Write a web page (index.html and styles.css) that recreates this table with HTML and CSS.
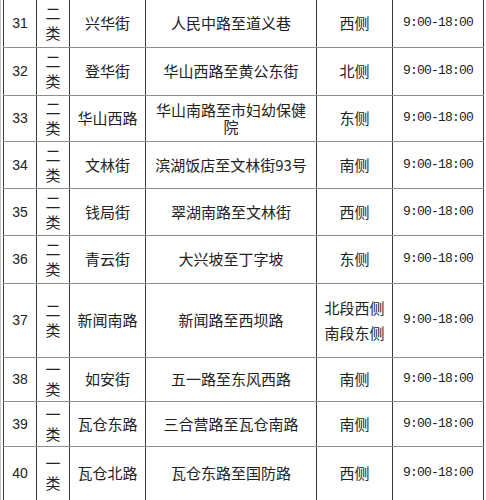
FILE: index.html
```html
<!DOCTYPE html>
<html lang="zh-CN">
<head>
<meta charset="utf-8">
<link rel="stylesheet" href="styles.css">
</head>
<body>
<div class="wrap">
<table class="grid">
  <colgroup>
    <col class="c-no"><col class="c-type"><col class="c-name"><col class="c-range"><col class="c-side"><col class="c-time">
  </colgroup>
  <tbody>
    <tr class="r47"><td class="no">31</td><td class="type">二类</td><td>兴华街</td><td>人民中路至道义巷</td><td>西侧</td><td class="time">9:00-18:00</td></tr>
    <tr class="r48"><td class="no">32</td><td class="type">二类</td><td>登华街</td><td>华山西路至黄公东街</td><td>北侧</td><td class="time">9:00-18:00</td></tr>
    <tr class="r46"><td class="no">33</td><td class="type">二类</td><td>华山西路</td><td class="tight">华山南路至市妇幼保健院</td><td>东侧</td><td class="time">9:00-18:00</td></tr>
    <tr class="r47"><td class="no">34</td><td class="type">二类</td><td>文林街</td><td>滨湖饭店至文林街93号</td><td>南侧</td><td class="time">9:00-18:00</td></tr>
    <tr class="r47"><td class="no">35</td><td class="type">二类</td><td>钱局街</td><td>翠湖南路至文林街</td><td>西侧</td><td class="time">9:00-18:00</td></tr>
    <tr class="r48"><td class="no">36</td><td class="type">二类</td><td>青云街</td><td>大兴坡至丁字坡</td><td>东侧</td><td class="time">9:00-18:00</td></tr>
    <tr class="r74"><td class="no">37</td><td class="type">二类</td><td>新闻南路</td><td>新闻路至西坝路</td><td class="loose">北段西侧<br>南段东侧</td><td class="time">9:00-18:00</td></tr>
    <tr class="r44"><td class="no">38</td><td class="type">一类</td><td>如安街</td><td>五一路至东风西路</td><td>南侧</td><td class="time">9:00-18:00</td></tr>
    <tr class="r45"><td class="no">39</td><td class="type">一类</td><td>瓦仓东路</td><td>三合营路至瓦仓南路</td><td>南侧</td><td class="time">9:00-18:00</td></tr>
    <tr class="r54"><td class="no">40</td><td class="type">一类</td><td>瓦仓北路</td><td>瓦仓东路至国防路</td><td>西侧</td><td class="time">9:00-18:00</td></tr>
  </tbody>
</table>
</div>
</body>
</html>
```
FILE: styles.css
```css
html, body {
  margin: 0;
  padding: 0;
  background: #fff;
}
.wrap {
  border-left: 1px solid #c4c4c4;
  padding-left: 2px;
  height: 500px;
  overflow: hidden;
}
.grid {
  border-collapse: collapse;
  table-layout: fixed;
  width: 480px;
  border-top: hidden;
  font-family: "Noto Sans CJK SC", "Liberation Sans", sans-serif;
  font-size: 15px;
  color: #222;
}
.c-no { width: 33px; }
.c-type { width: 33px; }
.c-name { width: 76px; }
.c-range { width: 171px; }
.c-side { width: 76px; }
.c-time { width: 91px; }
.grid td {
  border-left: 1px solid #3c3c3c;
  border-right: 1px solid #3c3c3c;
  border-top: 1px solid #8e8e8e;
  border-bottom: 1px solid #8e8e8e;
  text-align: center;
  vertical-align: middle;
  padding: 0 5px;
  line-height: 20px;
  font-weight: 400;
}
.grid td.no {
  font-family: "Liberation Sans", Arial, sans-serif;
  font-size: 14px;
  padding: 0;
}
.grid td.type {
  padding: 0 7px;
  line-height: 20px;
}
.grid td.time {
  font-family: "Liberation Mono", monospace;
  font-size: 13px;
  letter-spacing: -0.8px;
  padding: 0;
}
.grid td.tight {
  line-height: 17px;
  padding: 0 3px;
}
.grid td.loose {
  line-height: 25px;
}
.r44 { height: 44px; }
.r45 { height: 45px; }
.r46 { height: 46px; }
.r47 { height: 47px; }
.r48 { height: 48px; }
.r54 { height: 54px; }
.r74 { height: 74px; }
```
